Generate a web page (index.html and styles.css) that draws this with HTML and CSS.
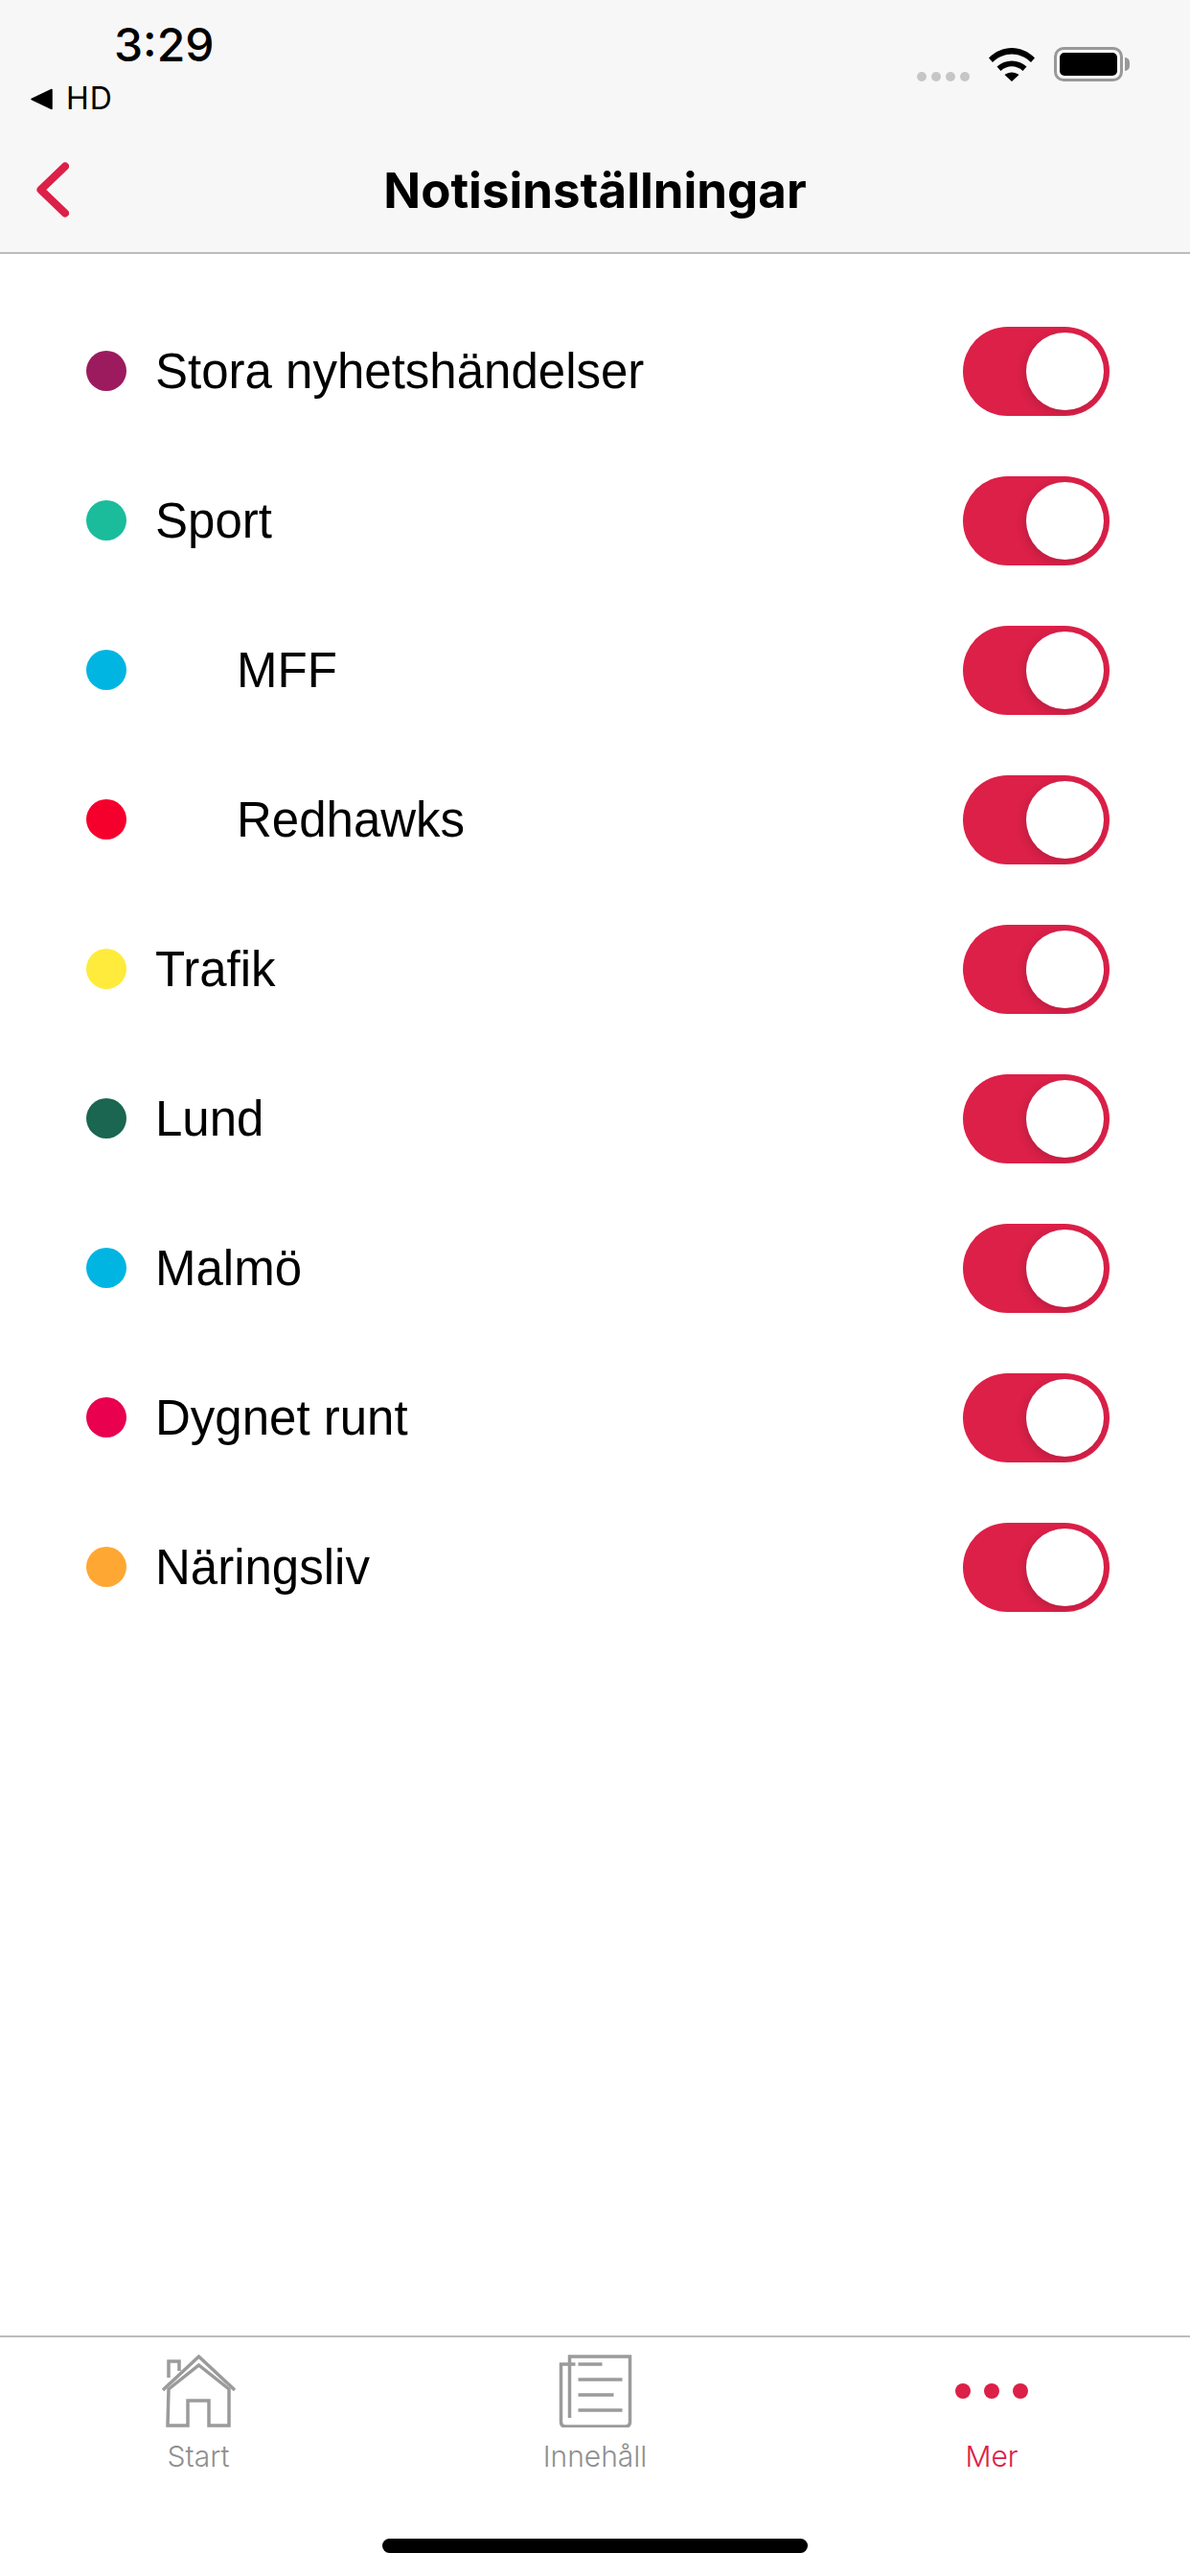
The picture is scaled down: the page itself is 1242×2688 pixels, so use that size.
FILE: index.html
```html
<!DOCTYPE html>
<html lang="sv">
<head>
    <meta charset="UTF-8">
    <meta name="viewport" content="width=device-width, initial-scale=1.0">
    <title>Notisinställningar</title>
    <link rel="stylesheet" href="styles.css">
</head>
<body>
    <header class="top-bar">
        <div class="status-bar">
            <div class="status-left">
                <div class="status-time">3:29</div>
                <div class="status-back">
                    <svg class="back-arrow" viewBox="0 0 22 22"><path d="M21 1.500v19L1 11z" fill="#000" stroke="#000" stroke-width="1.500" stroke-linejoin="round"/></svg>
                    <span>HD</span>
                </div>
            </div>
            <div class="status-right">
                <div class="signal"><i></i><i></i><i></i><i></i></div>
                <svg class="wifi" viewBox="0 0 48 36">
                    <path d="M0 11.500C13.500 -2.500 34.500 -2.500 48 11.500L44 16C32.500 4.500 15.500 4.500 4 16z"/>
                    <path d="M8.500 20.500C17 12.500 31 12.500 39.500 20.500L35.500 25C28.500 18.800 19.500 18.800 12.500 25z"/>
                    <path d="M16.500 29C21 25.500 27 25.500 31.500 29L24 36z"/>
                </svg>
                <div class="battery"><div class="battery-fill"></div></div>
            </div>
        </div>
        <div class="nav-bar">
            <svg class="nav-back" viewBox="0 0 34 58"><path d="M30 4.500L4.500 29 30 53.500" fill="none" stroke="#dc2048" stroke-width="8" stroke-linecap="round" stroke-linejoin="round"/></svg>
            <h1>Notisinställningar</h1>
        </div>
    </header>

    <ul class="topic-list">
        <li class="topic"><span class="dot dot-purple"></span><span class="topic-name">Stora nyhetshändelser</span><div class="toggle"><span class="knob"></span></div></li>
        <li class="topic"><span class="dot dot-green"></span><span class="topic-name">Sport</span><div class="toggle"><span class="knob"></span></div></li>
        <li class="topic"><span class="dot dot-blue"></span><span class="topic-name sub">MFF</span><div class="toggle"><span class="knob"></span></div></li>
        <li class="topic"><span class="dot dot-red"></span><span class="topic-name sub">Redhawks</span><div class="toggle"><span class="knob"></span></div></li>
        <li class="topic"><span class="dot dot-yellow"></span><span class="topic-name">Trafik</span><div class="toggle"><span class="knob"></span></div></li>
        <li class="topic"><span class="dot dot-dark"></span><span class="topic-name">Lund</span><div class="toggle"><span class="knob"></span></div></li>
        <li class="topic"><span class="dot dot-blue"></span><span class="topic-name">Malmö</span><div class="toggle"><span class="knob"></span></div></li>
        <li class="topic"><span class="dot dot-pink"></span><span class="topic-name">Dygnet runt</span><div class="toggle"><span class="knob"></span></div></li>
        <li class="topic"><span class="dot dot-orange"></span><span class="topic-name">Näringsliv</span><div class="toggle"><span class="knob"></span></div></li>
    </ul>

    <footer class="tab-bar">
        <nav class="tabs">
            <div class="tab">
                <svg class="tab-icon" viewBox="0 0 77 76" fill="none" stroke="#9b9b9b" stroke-width="3.500">
                    <path d="M1 37L38.500 2 76 37"/>
                    <path d="M7 36L38.500 11 70 36v38H49V48H27v26H6z"/>
                    <path d="M7 24V7h11v10"/>
                </svg>
                <span>Start</span>
            </div>
            <div class="tab">
                <svg class="tab-icon" viewBox="0 0 76 76" fill="none" stroke="#9b9b9b" stroke-width="3.500">
                    <path d="M17 10H2v60q0 5 5 5h62q5 0 5-5V2H11v64"/>
                    <path d="M20 10h25M20 26h46M20 42h37M20 58h46"/>
                </svg>
                <span>Innehåll</span>
            </div>
            <div class="tab active">
                <div class="more-dots"><i></i><i></i><i></i></div>
                <span>Mer</span>
            </div>
        </nav>
        <div class="home-bar"></div>
    </footer>
</body>
</html>
```

FILE: styles.css
```css
* {
    box-sizing: border-box;
}

body {
    font-family: "Liberation Sans", Arial, sans-serif;
    background-color: #fff;
    color: #000;
    margin: 0;
    padding: 0;
    width: 1242px;
    height: 2688px;
    display: flex;
    flex-direction: column;
    overflow: hidden;
}

.top-bar {
    background-color: #f7f7f7;
    height: 265px;
    border-bottom: 2px solid #bcbcbc;
}

.status-bar {
    height: 133px;
    display: flex;
    justify-content: space-between;
    font-family: Inter, sans-serif;
}

.status-left {
    padding: 18px 0 0 32px;
}

.status-time {
    font-size: 48px;
    line-height: 58px;
    font-weight: 500;
    margin-left: 87px;
}

.status-back {
    display: flex;
    align-items: center;
    gap: 14px;
    font-size: 32px;
    line-height: 40px;
    letter-spacing: 1px;
    margin-top: 7px;
}

.back-arrow {
    width: 23px;
    height: 23px;
}

.status-right {
    display: flex;
    align-items: flex-start;
    padding: 49px 70px 0 0;
}

.signal {
    display: flex;
    gap: 5px;
    margin: 26px 20px 0 0;
}

.signal i {
    width: 10px;
    height: 10px;
    border-radius: 50%;
    background-color: #c6c6c6;
}

.wifi {
    width: 48px;
    height: 36px;
    margin-right: 20px;
}

.battery {
    position: relative;
    width: 72px;
    height: 36px;
    border: 3px solid #999;
    border-radius: 10px;
    padding: 3px;
}

.battery::after {
    content: "";
    position: absolute;
    right: -10px;
    top: 8px;
    width: 5px;
    height: 14px;
    background-color: #999;
    border-radius: 0 7px 7px 0;
}

.battery-fill {
    height: 100%;
    background-color: #000;
    border-radius: 5px;
}

.nav-bar {
    position: relative;
    height: 130px;
    display: flex;
    align-items: center;
    justify-content: center;
}

.nav-bar h1 {
    margin: 0;
    font-family: Inter, sans-serif;
    font-size: 51px;
    font-weight: 700;
}

.nav-back {
    position: absolute;
    left: 38px;
    top: 36px;
    width: 34px;
    height: 58px;
}

.topic-list {
    list-style: none;
    margin: 0;
    padding: 44px 84px 0 90px;
}

.topic {
    height: 156px;
    display: flex;
    align-items: center;
}

.dot {
    width: 42px;
    height: 42px;
    border-radius: 50%;
    margin-right: 30px;
}

.dot-purple { background-color: #9b1b5e; }
.dot-green { background-color: #1abc9c; }
.dot-blue { background-color: #00b5e2; }
.dot-red { background-color: #f5002c; }
.dot-yellow { background-color: #ffeb3b; }
.dot-dark { background-color: #1a6651; }
.dot-pink { background-color: #e9004f; }
.dot-orange { background-color: #ffa733; }

.topic-name {
    font-size: 51px;
    flex: 1;
}

.topic-name.sub {
    padding-left: 85px;
}

.toggle {
    width: 153px;
    height: 93px;
    border-radius: 47px;
    background-color: #dc2048;
    padding: 6px;
    display: flex;
    justify-content: flex-end;
}

.knob {
    width: 81px;
    height: 81px;
    border-radius: 50%;
    background-color: #fff;
    box-shadow: -2px 3px 8px rgba(60, 20, 40, 0.2);
}

.tab-bar {
    margin-top: auto;
    height: 251px;
    border-top: 2px solid #bcbcbc;
    font-family: Inter, sans-serif;
}

.tabs {
    display: flex;
    padding-top: 18px;
}

.tab {
    width: 414px;
    display: flex;
    flex-direction: column;
    align-items: center;
    font-size: 30px;
    line-height: 40px;
    font-weight: 300;
    color: #8f8f8f;
}

.tab.active {
    color: #dc2048;
}

.tab-icon {
    width: 77px;
    height: 76px;
    margin-bottom: 10px;
}

.more-dots {
    height: 76px;
    margin-bottom: 10px;
    display: flex;
    align-items: center;
    gap: 14px;
}

.more-dots i {
    width: 16px;
    height: 16px;
    border-radius: 50%;
    background-color: #dc2048;
}

.home-bar {
    width: 444px;
    height: 15px;
    margin: 66px auto 0;
    background-color: #000;
    border-radius: 8px;
}
```
